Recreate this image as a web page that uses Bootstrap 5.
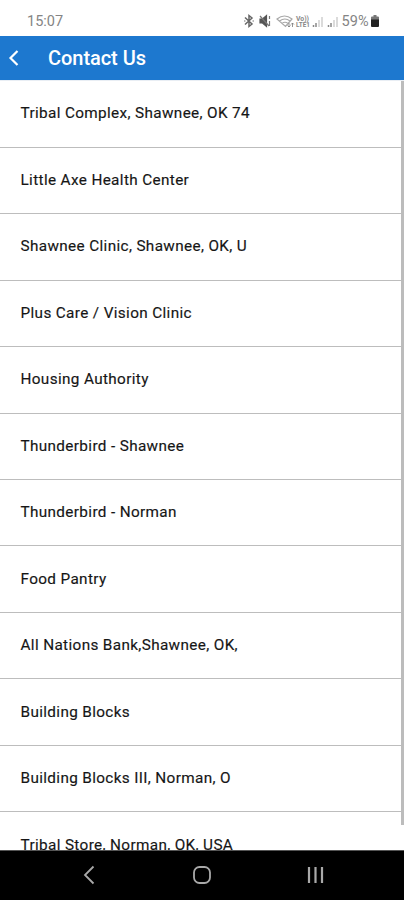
<!DOCTYPE html>
<html lang="en">
<head>
<meta charset="utf-8">
<meta name="viewport" content="width=device-width, initial-scale=1">
<title>Contact Us</title>
<link href="https://cdn.jsdelivr.net/npm/bootstrap@5.3.0/dist/css/bootstrap.min.css" rel="stylesheet">
<style>
body { font-family: Roboto, "Liberation Sans", sans-serif; height: 900px; }
.status-bar { height: 36px; padding: 5px 25px 0 27px; color: #858585; font-size: 14.5px; line-height: 33px; }
.battery-level { padding-top: 1px; }
.battery-icon { margin-left: 2.5px; }
.app-bar { height: 44px; padding: 0 8px; background: #1d78cf; }
.app-title { font-size: 20px; font-weight: 500; line-height: 44px; margin-left: 27px; letter-spacing: -.05px; }
.contacts { border-top: 1px solid #e9eef4; }
.contacts .contact { height: 66.45px; padding: 0 20.5px; border: 0; border-bottom: 1.5px solid #bdbdbd; color: #161616; font-size: 15.3px; letter-spacing: .36px; border-radius: 0; -webkit-text-stroke: .15px #161616; }
.contacts .contact:first-child { height: 66.8px; }
.scroll-thumb { top: 1px; right: 0; width: 3px; height: 744px; background: #bcbcbc; }
.nav-keys { height: 50px; background: #000; border-top: 1px solid #555; }
</style>
</head>
<body class="bg-white d-flex flex-column overflow-hidden">
<header class="status-bar d-flex justify-content-between flex-shrink-0">
  <span class="clock">15:07</span>
  <div class="d-flex align-items-center">
    <svg width="99" height="16" viewBox="0 0 99 16" fill="none" stroke="#555" stroke-width="1.2">
      <path d="M2 4.500 9 11 6 13.500V2.500L9 5 2 11.500" stroke="#666" stroke-width="1.500"/>
      <path d="M1 8h1.500M9.500 8H11" stroke="#777"/>
      <path d="M17 6h2.500l4-3.500v11l-4-3.500H17z" fill="#555"/>
      <path d="M17 3l9 10M26.500 3v3M26.500 8v5" stroke="#777"/>
      <g stroke="#a8a8a8"><path d="M34 6Q41.500 0 49 6L42.500 13.500zM36.500 8Q42 4 47 8M39 10.500Q42 8 45 10.500"/></g>
      <path d="M46 10v4M44.500 12.500l1.500 1.500 1.500-1.500M49.500 14v-4M48 11.500l1.500-1.500 1.500 1.500" stroke="#777" stroke-width=".8"/>
      <text x="53" y="7.500" font-size="6.500" font-weight="700" fill="#888" stroke="none" textLength="13" lengthAdjust="spacingAndGlyphs">Vo))</text>
      <text x="53" y="14" font-size="6.500" font-weight="700" fill="#888" stroke="none" textLength="14" lengthAdjust="spacingAndGlyphs">LTE1</text>
      <g stroke-width="1.500"><path d="M70.500 14v-2M73 14v-4" stroke="#888"/><path d="M76 14V7M79 14V4" stroke="#d0d0d0"/>
      <path d="M85.500 14v-2M88 14v-4" stroke="#888"/><path d="M91 14V7M94 14V4" stroke="#d0d0d0"/></g>
    </svg>
    <span class="battery-level">59%</span>
    <svg class="battery-icon" width="8" height="12" viewBox="0 0 8 12"><path d="M2.500 0h3v1.500H7a1 1 0 0 1 1 1V5H0V2.500a1 1 0 0 1 1-1h1.500z" fill="#777"/><path d="M0 4.500h8V11a1 1 0 0 1-1 1H1a1 1 0 0 1-1-1z" fill="#222"/></svg>
  </div>
</header>
<nav class="app-bar d-flex align-items-center text-white flex-shrink-0">
  <svg width="13" height="18" viewBox="0 0 13 18" fill="none" stroke="#fff" stroke-width="2.200"><path d="M9.500 2 2.500 9l7 7"/></svg>
  <h1 class="app-title mb-0">Contact Us</h1>
</nav>
<main class="position-relative flex-grow-1 overflow-hidden">
  <div class="contacts list-group list-group-flush">
    <a class="contact list-group-item d-flex align-items-center">Tribal Complex, Shawnee, OK 74</a>
    <a class="contact list-group-item d-flex align-items-center">Little Axe Health Center</a>
    <a class="contact list-group-item d-flex align-items-center">Shawnee Clinic, Shawnee, OK, U</a>
    <a class="contact list-group-item d-flex align-items-center">Plus Care / Vision Clinic</a>
    <a class="contact list-group-item d-flex align-items-center">Housing Authority</a>
    <a class="contact list-group-item d-flex align-items-center">Thunderbird - Shawnee</a>
    <a class="contact list-group-item d-flex align-items-center">Thunderbird - Norman</a>
    <a class="contact list-group-item d-flex align-items-center">Food Pantry</a>
    <a class="contact list-group-item d-flex align-items-center">All Nations Bank,Shawnee, OK,</a>
    <a class="contact list-group-item d-flex align-items-center">Building Blocks</a>
    <a class="contact list-group-item d-flex align-items-center">Building Blocks III, Norman, O</a>
    <a class="contact list-group-item d-flex align-items-center">Tribal Store, Norman, OK, USA</a>
  </div>
  <div class="scroll-thumb position-absolute"></div>
</main>
<footer class="nav-keys flex-shrink-0">
  <svg class="d-block" width="404" height="49" viewBox="0 0 404 49" fill="none" stroke="#a9a9a9" stroke-width="1.800">
    <path d="M93.500 15.500 85 24l8.500 8.500"/>
    <rect x="194" y="16" width="16" height="16" rx="5.500"/>
    <path d="M309 16v16M315.500 16v16M322 16v16" stroke-width="2.200"/>
  </svg>
</footer>
<script src="https://cdn.jsdelivr.net/npm/bootstrap@5.3.0/dist/js/bootstrap.bundle.min.js"></script>
</body>
</html>
